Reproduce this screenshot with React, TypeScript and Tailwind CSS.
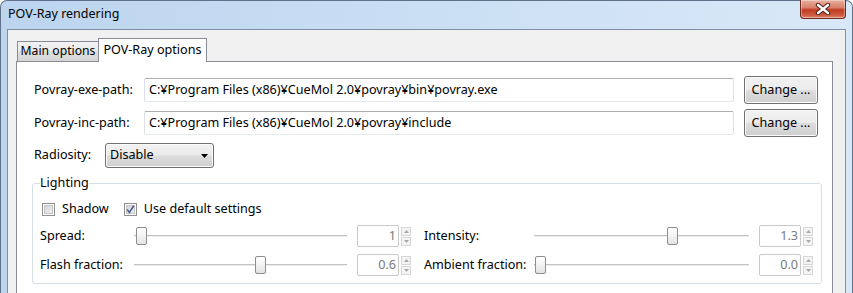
import React from "react";

function PushButton({ children }: { children: React.ReactNode }) {
  return (
    <div className="w-[74px] h-[28px] shrink-0 rounded-[3px] border border-[#707070] bg-[linear-gradient(#f2f2f2_0%,#ebebeb_48%,#dddddd_52%,#cfcfcf_100%)] shadow-[inset_0_0_0_1px_#fbfbfb] flex items-center justify-center text-[12.6px] leading-none text-black">
      {children}
    </div>
  );
}

function TextInput({ value }: { value: string }) {
  return (
    <div className="flex-1 h-[24px] rounded-[2px] border border-[#abadb3] border-l-[#dbdfe6] border-r-[#dbdfe6] border-b-[#e3e9ef] bg-white pl-[4px] flex items-center text-[12.6px] text-black whitespace-nowrap overflow-hidden">
      {value}
    </div>
  );
}

function Checkbox({ checked }: { checked: boolean }) {
  return (
    <div className="w-[13px] h-[13px] shrink-0 border border-[#8f8f8f] bg-white p-[1px]">
      <div className="w-full h-full bg-[linear-gradient(135deg,#d6d6d6_0%,#efefef_100%)] border border-[#c4c4c4] flex items-center justify-center">
        {checked && (
          <svg width="9" height="9" viewBox="0 0 9 9" className="overflow-visible">
            <path d="M1.2 4.6 L3.4 7.4 L7.8 0.8" fill="none" stroke="#4a5c92" strokeWidth="1.6" />
          </svg>
        )}
      </div>
    </div>
  );
}

function Slider({ width, thumb }: { width: number; thumb: number }) {
  return (
    <div className="relative h-[22px] flex items-center shrink-0" style={{ width }}>
      <div className="w-full h-[2px] bg-[#c4c4c4] border-b border-[#ededed]" />
      <div
        className="absolute top-[2px] w-[11px] h-[18px] rounded-[2px] border border-[#8e8e8e] bg-[linear-gradient(#ffffff_0%,#f3f3f3_50%,#e3e3e3_100%)]"
        style={{ left: thumb }}
      />
    </div>
  );
}

function Spin({ value }: { value: string }) {
  return (
    <div className="flex items-center gap-[2px] shrink-0">
      <div className="w-[42px] h-[22px] rounded-[2px] border border-[#c9c9c9] bg-white flex items-center justify-end pr-[2px] text-[12.6px] text-[#7a7a7a]">
        {value}
      </div>
      <div className="flex flex-col gap-[1px]">
        <div className="w-[10px] h-[9px] border border-[#d6d6d6] bg-[#f4f4f4] flex items-center justify-center">
          <svg width="5" height="3" viewBox="0 0 5 3"><path d="M0 3 L2.5 0 L5 3 Z" fill="#a8a8a8" /></svg>
        </div>
        <div className="w-[10px] h-[9px] border border-[#d6d6d6] bg-[#f4f4f4] flex items-center justify-center">
          <svg width="5" height="3" viewBox="0 0 5 3"><path d="M0 0 L2.5 3 L5 0 Z" fill="#a8a8a8" /></svg>
        </div>
      </div>
    </div>
  );
}

export default function App() {
  return (
    <div className="w-[853px] h-[293px] overflow-hidden font-['Noto_Sans',sans-serif] text-black">
      <div className="w-full h-[300px] flex flex-col rounded-t-[7px] border border-b-0 border-[#5f7189] bg-[linear-gradient(90deg,#bcd4ee_0%,#cadff4_50%,#d9e8f8_100%)]">
        {/* title bar */}
        <div className="h-[28px] shrink-0 flex items-start justify-between pl-[7px] pr-[6px]">
          <div className="pt-[4px] text-[12.5px] leading-[17px] text-black">POV-Ray rendering</div>
          <div className="w-[46px] h-[19px] -mt-[1px] rounded-b-[4px] border border-t-0 border-[#6e2a1f] bg-[linear-gradient(#eab0a0_0%,#d9806a_42%,#c13b22_55%,#cf5c43_85%,#dd8a72_100%)] shadow-[inset_0_0_0_1px_rgba(255,255,255,0.35)] flex items-center justify-center">
            <svg width="16" height="12" viewBox="0 0 16 12">
              <path d="M3 2 L13 10 M13 2 L3 10" stroke="#4b2019" strokeWidth="4.4" strokeLinecap="round" />
              <path d="M3 2 L13 10 M13 2 L3 10" stroke="#ffffff" strokeWidth="2.4" strokeLinecap="round" />
            </svg>
          </div>
        </div>
        {/* client */}
        <div className="flex-1 ml-[6px] mr-[6px] border-t border-l border-r border-[#7f8ea3] bg-[#f0f0f0] pl-[8px] pr-[12px] pt-[8px] flex flex-col">
          {/* tabs */}
          <div className="flex items-end pl-[1px] h-[23px] shrink-0">
            <div className="h-[20px] w-[81px] border border-b-0 border-r-0 border-[#898c95] bg-[linear-gradient(#f2f2f2_0%,#ebebeb_50%,#dedede_50%,#d6d6d6_100%)] flex items-center justify-center text-[12.2px] leading-none">
              Main options
            </div>
            <div className="relative z-10 -mb-[1px] h-[24px] w-[109px] border border-b-0 border-[#898c95] bg-white flex items-start justify-center pt-[3px] text-[12.6px] leading-[16px]">
              POV-Ray options
            </div>
          </div>
          {/* panel */}
          <div className="flex-1 border border-[#898c95] bg-white pl-[15px] pr-[11px] pt-[14px] flex flex-col text-[12.6px]">
            <div className="flex items-center h-[28px] pl-[2px] pr-[3px]">
              <div className="w-[110px] shrink-0">Povray-exe-path:</div>
              <TextInput value="C:¥Program Files (x86)¥CueMol 2.0¥povray¥bin¥povray.exe" />
              <div className="w-[10px] shrink-0" />
              <PushButton>Change ...</PushButton>
            </div>
            <div className="flex items-center h-[28px] mt-[5px] pl-[2px] pr-[3px]">
              <div className="w-[110px] shrink-0">Povray-inc-path:</div>
              <TextInput value="C:¥Program Files (x86)¥CueMol 2.0¥povray¥include" />
              <div className="w-[10px] shrink-0" />
              <PushButton>Change ...</PushButton>
            </div>
            <div className="flex items-center h-[25px] mt-[6px] pl-[2px]">
              <div className="w-[71px] shrink-0">Radiosity:</div>
              <div className="w-[109px] h-[25px] rounded-[3px] border border-[#707070] bg-[linear-gradient(#f2f2f2_0%,#ebebeb_48%,#dddddd_52%,#cfcfcf_100%)] shadow-[inset_0_0_0_1px_#fbfbfb] flex items-center justify-between pl-[4px] pr-[5px]">
                <span>Disable</span>
                <svg width="7" height="4" viewBox="0 0 7 4"><path d="M0 0 L7 0 L3.5 4 Z" fill="#000" /></svg>
              </div>
            </div>
            {/* Lighting group */}
            <fieldset className="mt-[7px] border border-[#d5dfe5] rounded-[3px] pl-[7px] pr-[8px] pb-[7px]">
              <legend className="px-0 leading-[16px]">Lighting</legend>
              <div className="flex items-center h-[17px] mt-[10px] pl-[2px]">
                <Checkbox checked={false} />
                <span className="ml-[7px]">Shadow</span>
                <div className="ml-[15px]"><Checkbox checked={true} /></div>
                <span className="ml-[7px]">Use default settings</span>
              </div>
              <div className="flex items-center h-[22px] mt-[7px]">
                <div className="w-[94px] shrink-0">Spread:</div>
                <Slider width={213} thumb={2} />
                <div className="w-[10px] shrink-0" />
                <Spin value="1" />
                <div className="w-[13px] shrink-0" />
                <div className="w-[110px] shrink-0">Intensity:</div>
                <Slider width={215} thumb={133} />
                <div className="w-[10px] shrink-0" />
                <Spin value="1.3" />
              </div>
              <div className="flex items-center h-[22px] mt-[7px]">
                <div className="w-[94px] shrink-0">Flash fraction:</div>
                <Slider width={213} thumb={121} />
                <div className="w-[10px] shrink-0" />
                <Spin value="0.6" />
                <div className="w-[13px] shrink-0" />
                <div className="w-[110px] shrink-0">Ambient fraction:</div>
                <Slider width={215} thumb={1} />
                <div className="w-[10px] shrink-0" />
                <Spin value="0.0" />
              </div>
            </fieldset>
          </div>
        </div>
      </div>
    </div>
  );
}
